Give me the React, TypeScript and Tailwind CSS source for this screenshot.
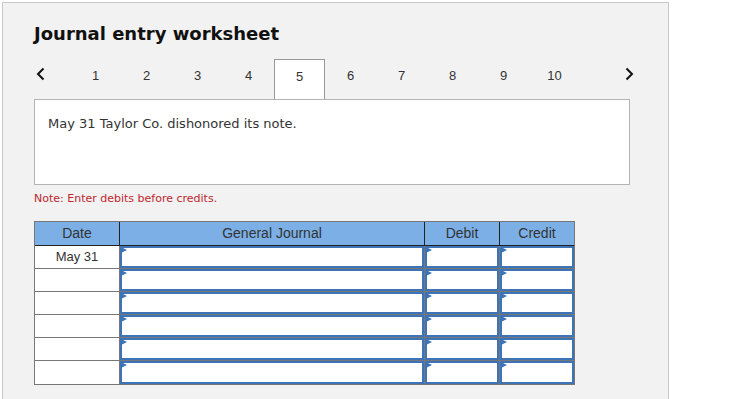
const TABS = ['1', '2', '3', '4', '5', '6', '7', '8', '9', '10'];
const ACTIVE = '5';
const ROWS = [
  { date: 'May 31' },
  { date: '' },
  { date: '' },
  { date: '' },
  { date: '' },
  { date: '' },
];

function InputCell({ width, last }: { width: string; last?: boolean }) {
  return (
    <div className={`${width} h-full bg-white ${last ? '' : 'border-r border-[#777]'}`}>
      <div className="relative h-full border-2 border-[#3d74b8]">
        <span className="absolute -top-[1px] -left-[1px] h-0 w-0 border-y-[3px] border-y-transparent border-l-[6px] border-l-[#3d74b8]" />
      </div>
    </div>
  );
}

export default function App() {
  return (
    <div className="h-[399px] overflow-hidden bg-white pl-[2px] pt-[2px]">
      <div
        className="h-[420px] w-[667px] border border-[#c8c8c8] bg-[#f2f2f2] pl-[31px] pt-[19px]"
        style={{ fontFamily: 'Verdana, "DejaVu Sans", sans-serif' }}
      >
        {/* Title */}
        <h1 className="text-[18px] font-bold leading-[24px] text-[#111]">Journal entry worksheet</h1>

        {/* Tabs */}
        <div className="mt-[13px] flex h-[40px] w-[595px] items-start font-['Liberation_Sans',Arial,sans-serif] text-[13px] text-[#333]">
          <div className="flex w-[36px] items-center pl-[2px] pt-[8px]">
            <svg width="9" height="14" viewBox="0 0 9 14" fill="none">
              <path d="M7.5 1.5 L2 7 L7.5 12.5" stroke="#111" strokeWidth="2" />
            </svg>
          </div>
          {TABS.map((tab) => {
            const isActive = tab === ACTIVE;
            return (
              <div
                key={tab}
                className={`flex h-full w-[51px] justify-center pt-[7px] ${
                  isActive ? 'relative z-10 -mb-[1px] h-[41px] border border-b-0 border-[#999] bg-white' : ''
                }`}
              >
                {tab}
              </div>
            );
          })}
          <div className="flex flex-1 justify-end pt-[8px]">
            <svg width="9" height="14" viewBox="0 0 9 14" fill="none" className="mr-[-5px]">
              <path d="M1.5 1.5 L7 7 L1.5 12.5" stroke="#111" strokeWidth="2" />
            </svg>
          </div>
        </div>

        {/* Question box */}
        <div className="h-[86px] w-[596px] border border-[#b4b4b4] bg-white px-[13px] pt-[16px] text-[13px] leading-[16px] text-[#333]">
          May 31 Taylor Co. dishonored its note.
        </div>

        <p className="mt-[7px] text-[11px] leading-[14px] text-[#c0272d]">Note: Enter debits before credits.</p>

        {/* Journal table */}
        <div className="mt-[15px] w-[541px] border border-[#777] font-['Liberation_Sans',Arial,sans-serif] text-[13px] text-[#333]">
          <div className="flex h-[24px] items-center border-b border-[#222] bg-[#7bafe6] text-[14px]">
            <div className="flex h-full w-[85px] items-center justify-center border-r border-[#222]">Date</div>
            <div className="flex h-full w-[305px] items-center justify-center border-r border-[#222]">General Journal</div>
            <div className="flex h-full w-[75px] items-center justify-center border-r border-[#222]">Debit</div>
            <div className="flex h-full w-[74px] items-center justify-center">Credit</div>
          </div>
          {ROWS.map((row, i) => (
            <div key={i} className={`flex h-[23px] ${i < ROWS.length - 1 ? 'border-b border-[#777]' : ''}`}>
              <div className="flex h-full w-[85px] items-center justify-center border-r border-[#777] bg-white">
                {row.date}
              </div>
              <InputCell width="w-[305px]" />
              <InputCell width="w-[75px]" />
              <InputCell width="w-[74px]" last />
            </div>
          ))}
        </div>
      </div>
    </div>
  );
}
